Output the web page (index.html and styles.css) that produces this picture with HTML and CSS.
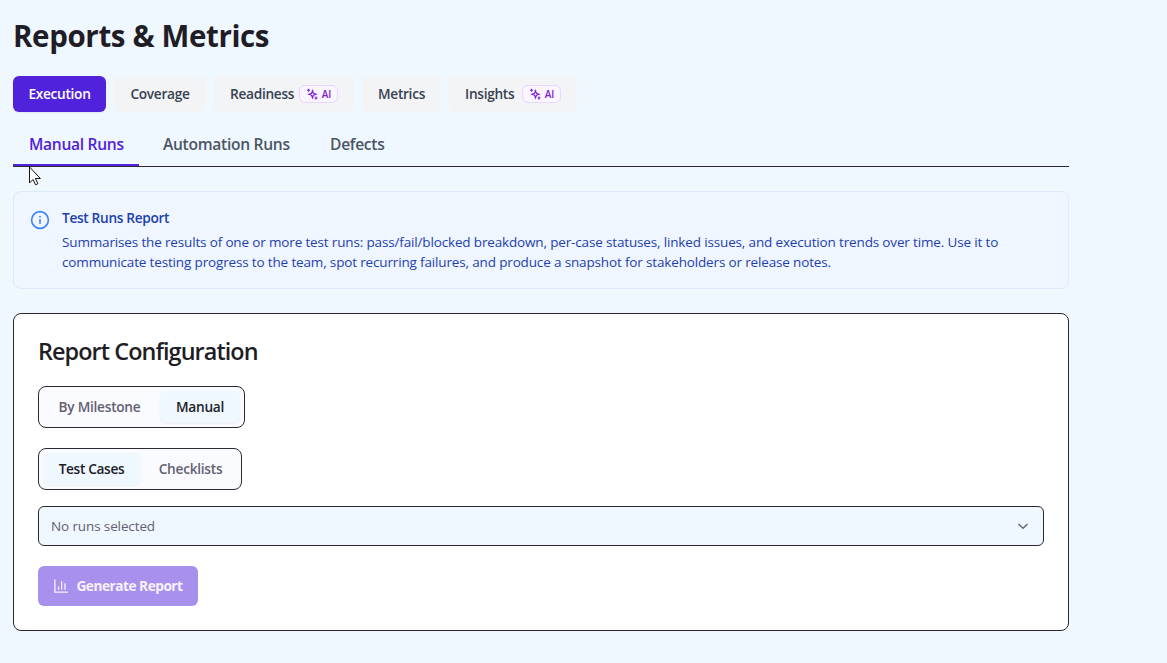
FILE: index.html
```
<!DOCTYPE html>
<html lang="en">
<head>
<meta charset="utf-8">
<title>Reports &amp; Metrics</title>
<link rel="stylesheet" href="styles.css">
</head>
<body>
<svg class="defs" width="0" height="0" aria-hidden="true">
  <symbol id="sparkle" viewBox="0 0 24 24">
    <path d="M13 5.500l1.900 5.100 5.100 1.900-5.100 1.900L13 19.500l-1.900-5.100L6 12.500l5.100-1.900zM5 1.500v6M2 4.500h6M20 17v6M17 20h6"/>
  </symbol>
</svg>
<main class="page">
  <h1 class="title">Reports &amp; Metrics</h1>
  <nav class="pills">
    <button class="pill pill-execution active">Execution</button>
    <button class="pill pill-coverage">Coverage</button>
    <button class="pill pill-readiness"><span>Readiness</span><span class="ai"><svg><use href="#sparkle"/></svg>AI</span></button>
    <button class="pill pill-metrics">Metrics</button>
    <button class="pill pill-insights"><span>Insights</span><span class="ai"><svg><use href="#sparkle"/></svg>AI</span></button>
  </nav>
  <nav class="tabs">
    <a class="tab tab-manual current">Manual Runs</a>
    <a class="tab tab-auto">Automation Runs</a>
    <a class="tab">Defects</a>
    <svg class="cursor" width="14" height="20" viewBox="0 0 14 20"><path d="M1.500 1v16l3.500-3.500 2.600 5.300 2.300-1.100-2.500-5.200h5z"/></svg>
  </nav>
  <section class="info">
    <svg class="info-icon" viewBox="0 0 20 20"><circle cx="10" cy="10" r="8.400"/><path d="M10 9.200v4.500M10 6v1.500"/></svg>
    <div>
      <h2 class="info-title">Test Runs Report</h2>
      <p class="info-text">Summarises the results of one or more test runs: pass/fail/blocked breakdown, per-case statuses, linked issues, and execution trends over time. Use it to<br>communicate testing progress to the team, spot recurring failures, and produce a snapshot for stakeholders or release notes.</p>
    </div>
  </section>
  <section class="card">
    <h2 class="card-title">Report Configuration</h2>
    <div class="segment segment-mode">
      <button class="option option-milestone">By Milestone</button>
      <button class="option chosen">Manual</button>
    </div>
    <div class="segment segment-kind">
      <button class="option option-cases chosen">Test Cases</button>
      <button class="option">Checklists</button>
    </div>
    <div class="select"><span>No runs selected</span>
      <svg width="16" height="16" viewBox="0 0 16 16"><path d="M3.500 6L8 10.300 12.500 6"/></svg>
    </div>
    <button class="generate">
      <svg width="16" height="16" viewBox="0 0 16 16"><path d="M1.900 1.500v12.600H14.900M5.500 8.500v3.300M8.700 3.300v8.500M12 5.200v6.600"/></svg>
      <span>Generate Report</span>
    </button>
  </section>
</main>
</body>
</html>
```

FILE: styles.css
```
* { box-sizing: border-box; }
body {
  margin: 0;
  background: #eff7ff;
  color: #211d27;
  font-family: "Segoe UI", "Open Sans", "Noto Sans", sans-serif;
  font-size: 13.7px;
}
h1, h2, p { margin: 0; }
button { font: inherit; border: 0; padding: 0; white-space: nowrap; }
.defs { position: absolute; }
.page { width: 1056px; margin-left: 13px; padding-top: 16px; }
.title { height: 60px; font-size: 29.5px; line-height: 39px; font-weight: 700; letter-spacing: -.37px; white-space: nowrap; }
.pills { display: flex; gap: 8px; height: 36px; }
.pill {
  display: flex; align-items: center; justify-content: center;
  border-radius: 6px; background: #f3f4f6; color: #374151;
  font-weight: 600; letter-spacing: -.3px; line-height: 18px; padding-bottom: 1px;
}
.pill.active { background: #5122dc; color: #fff; box-shadow: 0 1px 2px #0001; }
.pill-execution { width: 93px; }
.pill-coverage { width: 92px; }
.pill-readiness { width: 140px; }
.pill-metrics { width: 79px; }
.pill-insights { width: 128px; }
.pill-readiness, .pill-insights { justify-content: space-between; padding-left: 16px; padding-right: 16px; }
.ai {
  display: flex; align-items: center; justify-content: center; gap: 4px;
  width: 39px; height: 18px; border: 1px solid #e9d5ff; border-radius: 6px;
  background: #faf5ff; color: #7e22ce; font-size: 10px; letter-spacing: 0;
}
.ai svg { width: 12px; height: 12px; fill: none; stroke: #7e22ce; stroke-width: 2.4; }
.tabs {
  position: relative; display: flex; height: 55px; padding-top: 12px;
  border-bottom: 1px solid #2b2733; font-size: 15.6px; font-weight: 600; letter-spacing: -.3px;
}
.tab { height: 42px; padding: 9px 0 0 16px; line-height: 22px; color: #4b5563; white-space: nowrap; }
.tab-manual { width: 126px; margin-right: 8px; }
.tab-auto { width: 159px; margin-right: 8px; }
.current { color: #5122dc; border-bottom: 2px solid #5122dc; }
.cursor { position: absolute; left: 15px; top: 54px; fill: #fff; stroke: #111; }
.info {
  display: flex; gap: 12px; height: 98px; margin-top: 24px; padding: 16px;
  border: 1px solid #dbeafe; border-radius: 8px; background: #eff6ff; color: #1e40af;
}
.info-icon { flex: none; width: 20px; height: 20px; margin-top: 2px; fill: none; stroke: #3b82f6; stroke-width: 1.6; }
.info-title { font-size: 13.7px; line-height: 20px; font-weight: 600; letter-spacing: -.33px; }
.info-text { margin-top: 4px; font-size: 13.5px; line-height: 20px; letter-spacing: -.153px; white-space: nowrap; }
.card {
  height: 318px; margin-top: 24px; padding: 24px;
  border: 1px solid #2b2733; border-radius: 8px; background: #fff;
}
.card-title { height: 48px; font-size: 23.4px; line-height: 27px; font-weight: 600; letter-spacing: -.92px; }
.segment {
  display: flex; gap: 4px; height: 42px; padding: 4px; margin-bottom: 20px;
  border: 1px solid #2b2733; border-radius: 8px; background: #fafbff;
}
.segment-mode { width: 207px; }
.segment-kind { width: 204px; margin-bottom: 16px; }
.option { flex: 1; padding-bottom: 1px; border-radius: 6px; background: none; color: #645f70; font-weight: 600; letter-spacing: -.27px; }
.option-milestone { flex: 0 0 113px; }
.option-cases { flex: 0 0 97px; letter-spacing: -.35px; }
.chosen { background: #eff7ff; color: #211d27; box-shadow: 0 1px 2px #0000000d; }
.select {
  display: flex; align-items: center; justify-content: space-between;
  height: 40px; padding: 0 12px; border: 1px solid #2b2733; border-radius: 6px;
  background: #eff7ff; color: #645f70; font-size: 13.5px; letter-spacing: -.12px; line-height: 18px;
}
.select span { padding-bottom: 1px; }
.select svg { fill: none; stroke: #645f70; stroke-width: 1.3; }
.generate {
  display: flex; align-items: center; justify-content: center; gap: 7px;
  width: 160px; height: 40px; margin-top: 20px; border-radius: 6px;
  background: #a890ed; color: #f6f3fd; font-weight: 700; letter-spacing: -.5px;
}
.generate span { padding-bottom: 1px; }
.generate svg { fill: none; stroke: #f6f3fd; stroke-width: 1.3; }
```
